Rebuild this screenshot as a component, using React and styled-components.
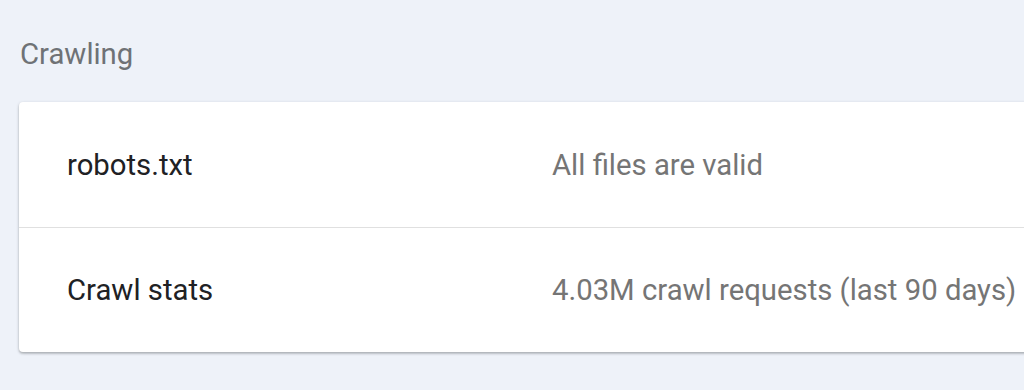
import React from "react";
import styled, { createGlobalStyle } from "styled-components";

const GlobalStyle = createGlobalStyle`
  html, body {
    margin: 0;
    padding: 0;
    background: #eef2f9;
    overflow: hidden;
  }
  body {
    font-family: Roboto, "Liberation Sans", sans-serif;
  }
`;

const Page = styled.div`
  width: 1024px;
  height: 390px;
  padding: 36px 0 0 19px;
  box-sizing: border-box;
  overflow: hidden;
`;

const SectionTitle = styled.h2`
  margin: 0 0 0 1px;
  font-size: 29.3px;
  font-weight: 400;
  line-height: 36px;
  color: #6f7276;
`;

const Card = styled.div`
  margin-top: 30px;
  width: 1060px;
  background: #fff;
  border-radius: 4px;
  box-shadow: 0 1px 3px rgba(60, 64, 67, 0.32), 0 2px 2px rgba(60, 64, 67, 0.15);
`;

const Row = styled.div`
  display: grid;
  grid-template-columns: 485px 1fr;
  align-items: center;
  height: 125px;
  padding-left: 48px;
  box-sizing: border-box;
  border-top: ${(p) => (p.first ? "none" : "1px solid #e0e0e0")};
`;

const Label = styled.div`
  font-size: 29.3px;
  color: #202124;
`;

const Value = styled.div`
  font-size: 29.3px;
  color: #757575;
  white-space: nowrap;
`;

const rows = [
  { label: "robots.txt", value: "All files are valid" },
  { label: "Crawl stats", value: "4.03M crawl requests (last 90 days)" },
];

const App = () => {
  return (
    <>
      <GlobalStyle />
      <Page>
        <SectionTitle>Crawling</SectionTitle>
        <Card>
          {rows.map((row, index) => (
            <Row key={row.label} first={index === 0}>
              <Label>{row.label}</Label>
              <Value>{row.value}</Value>
            </Row>
          ))}
        </Card>
      </Page>
    </>
  );
};

export default App;
